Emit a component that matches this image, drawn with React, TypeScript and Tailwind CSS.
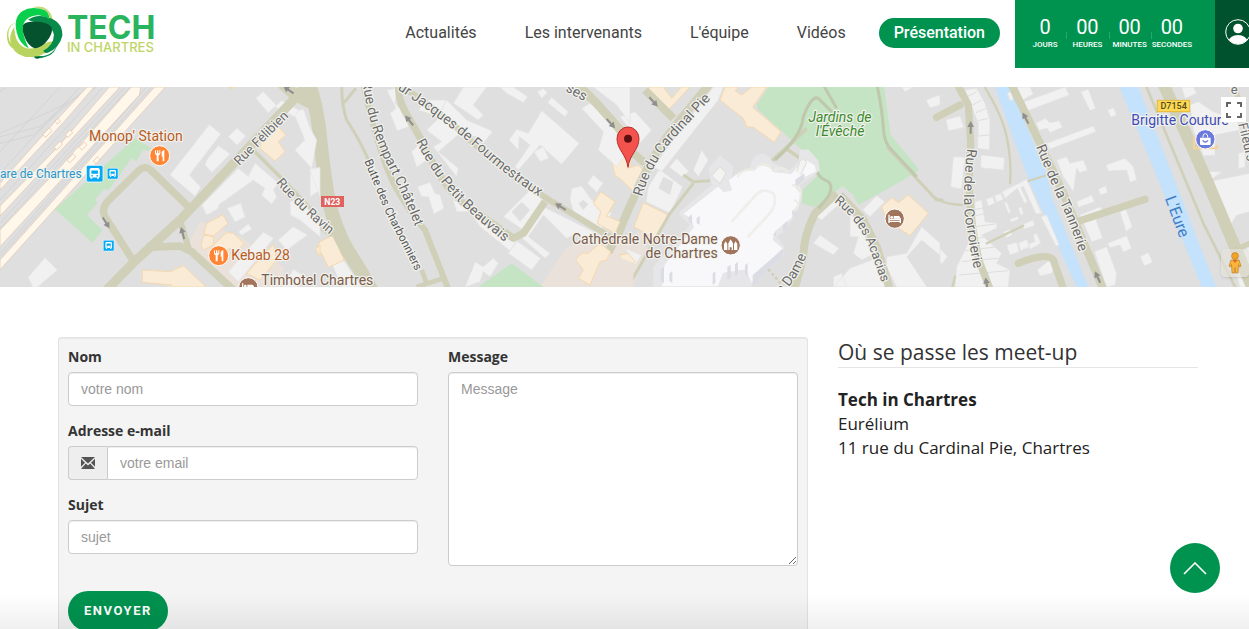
import React from "react";

const halo = "[paint-order:stroke] stroke-[#f2f2ee] stroke-[7px] [stroke-linejoin:round]";
const street = `font-[Roboto,sans-serif] text-[39px] fill-[#6b6b6b] ${halo}`;
const avenue = `font-[Roboto,sans-serif] text-[42px] fill-[#6b6b6b] ${halo}`;

type StreetProps = { id: string; d: string; children: string; className?: string };

function StreetName({ id, d, children, className = street }: StreetProps) {
  return (
    <>
      <path id={id} d={d} fill="none" />
      <text className={className}>
        <textPath href={`#${id}`}>{children}</textPath>
      </text>
    </>
  );
}

function Arrow({ x, y, angle }: { x: number; y: number; angle: number }) {
  return (
    <path
      d="M-18,-3 H2 V-10 L20,0 L2,10 V3 H-18 Z"
      fill="#8f8f8f"
      transform={`translate(${x} ${y}) rotate(${angle})`}
    />
  );
}

function Bus({ x, y, s }: { x: number; y: number; s: number }) {
  return (
    <g transform={`translate(${x} ${y}) scale(${s})`}>
      <rect x="-18" y="-18" width="36" height="36" rx="4" fill="#03a9f4" stroke="#e8f6fd" strokeWidth="2" />
      <path
        fill="#fff"
        fillRule="evenodd"
        d="M-7,-12 H7 Q11,-12 11,-8 V6 Q11,8 9,8 V11 H5 V8 H-5 V11 H-9 V8 Q-11,8 -11,6 V-8 Q-11,-12 -7,-12 Z M-7,-7 V0 H7 V-7 Z M-7,3 V6 H-4 V3 Z M4,3 V6 H7 V3 Z"
      />
    </g>
  );
}

function Food({ x, y }: { x: number; y: number }) {
  return (
    <g transform={`translate(${x} ${y})`}>
      <circle r="30" fill="#ff8534" stroke="#fff" strokeWidth="3" />
      <path
        d="M-14,-16 V-7 Q-14,-2 -9,-1 V17 H-3 V-1 Q2,-2 2,-7 V-16 H-1 V-7 H-4 V-16 H-8 V-7 H-11 V-16 Z M6,-10 Q8,-16 14,-17 V17 H9 V3 H6 Z"
        fill="#fff"
      />
    </g>
  );
}

function Hotel({ x, y }: { x: number; y: number }) {
  return (
    <g transform={`translate(${x} ${y})`}>
      <circle r="29" fill="#a1745c" stroke="#fff" strokeWidth="3" />
      <path d="M-17,-12 V13 M-17,8 H17 M17,-1 V13 M-17,2 H17" stroke="#fff" strokeWidth="4" fill="none" />
      <circle cx="-9" cy="-4" r="4" fill="#fff" />
      <path d="M-3,-8 H12 Q17,-7 17,0 H-3 Z" fill="#fff" />
    </g>
  );
}

function StationQuarter() {
  return (
    <g>
      <path d="M600,425 L560,500 L690,621 H850 L850,560 L720,470 Z M500,590 L550,555 L620,621 H500 Z" fill="#e9e1da" />
      <g fill="none" stroke="#cfcfcf" strokeWidth="2">
        <path d="M0,160 L150,95 L290,21 M0,170 L120,140 L200,70 M0,190 L100,165 L240,40 M0,280 L240,21 M0,360 L310,21 M0,430 L375,21 M0,445 L390,21 M0,520 L440,21 M0,530 L455,21 M20,21 L0,35 M0,215 L180,21" />
      </g>
      <path
        d="M262,21 L282,21 L195,122 L0,330 V310 L165,125 Z M328,21 H360 L0,408 V378 L170,205 Z M394,21 H422 L418,45 L0,500 V450 L180,262 Z M464,21 H496 L0,569 V540 Z"
        fill="#fff7ea"
        stroke="#dfc6b4"
        strokeWidth="2"
      />
      <g fill="#fff7ea" stroke="#dfc0a8" strokeWidth="2">
        {[
          [142, 158, 28], [173, 124, 12], [175, 197, 25], [207, 161, 20],
          [214, 235, 26], [249, 198, 22], [290, 241, 18],
        ].map(([x, y, w]) => (
          <rect key={x} x={-w / 2} y="-6" width={w} height="12" rx="2" transform={`translate(${x} ${y}) rotate(-46)`} />
        ))}
      </g>
      <path
        d="M165,388 L405,175 L455,205 L445,213 L430,208 L408,245 L395,234 L326,330 L312,328 L286,358 L292,370 L260,405 L307,450 L278,488 Z"
        fill="#c4e4c3"
      />
      <g fill="#f1f1f1" stroke="#e7e7e7" strokeWidth="2">
        <path d="M628,134 L662,162 L568,285 L602,322 L585,348 L510,285 Z" />
        <path d="M711,145 L737,168 L711,195 L685,170 Z" />
        <path d="M655,197 L690,222 L636,277 L615,255 L622,238 Z" />
        <path d="M790,35 L828,75 L805,98 L768,55 Z" />
        <path d="M606,375 L715,265 L745,290 L765,250 L835,310 L820,330 L830,350 L815,372 L785,345 L795,325 L760,300 L655,375 L655,385 L620,405 Z" />
        <path d="M722,370 L735,412 L705,425 L682,385 Z M745,432 L755,447 L725,465 L716,456 Z" />
        <path d="M880,95 L910,88 L930,145 L950,180 L935,265 L885,210 L915,180 Z" />
        <path d="M930,270 L960,262 V350 Z M835,480 L880,440 L922,465 L860,510 Z M870,365 L900,360 L960,430 V470 L900,420 L872,405 Z" />
        <path d="M790,457 L820,475 L715,605 L685,575 Z M135,533 L172,570 L112,621 H98 L85,592 Z M825,80 L845,62 L895,90 L885,110 Z" />
        <path d="M880,568 L910,588 L890,621 H850 Z" />
      </g>
      <g fill="#faebd7" stroke="#f5d9ad" strokeWidth="3">
        <path d="M668,405 L684,430 L640,468 L612,462 L620,430 Z M612,465 L640,470 L640,495 L610,510 L603,495 Z M640,495 L680,458 L700,460 L732,490 L710,515 L690,505 L660,525 Z" />
        <path d="M785,170 L830,135 L858,165 L835,185 L855,215 L825,243 L780,205 Z" />
        <path d="M427,570 L510,575 L550,557 L618,621 H515 V615 L427,607 Z M820,493 L830,540 L780,600 L740,580 Z M960,495 L947,508 L960,530 Z" />
      </g>
      <g fill="none" stroke="#d0d0b8" strokeLinejoin="round">
        <path d="M398,540 L318,415 Q300,390 325,362 L418,270 Q435,255 452,270 L570,385" strokeWidth="22" />
        <path d="M310,640 L400,548 L545,415 L720,230 L880,60 L930,0" strokeWidth="28" />
        <path d="M440,502 L540,498 L575,515 L700,630" strokeWidth="23" />
        <path d="M540,420 L566,505" strokeWidth="18" />
        <path d="M755,205 L850,300 L970,425" strokeWidth="11" />
        <path d="M835,0 L885,45 L960,85" strokeWidth="34" />
      </g>
      <Arrow x={318} y={428} angle={58} />
      <Arrow x={548} y={460} angle={-105} />
      <Arrow x={866} y={30} angle={-145} />
      <path d="M686,21 H700 L693,28 Z" fill="#f7d397" />
    </g>
  );
}

function OldTown() {
  return (
    <g>
      <path d="M770,500 L830,490 L970,550 V621 H690 Z" fill="#e9e1da" />
      <path d="M505,621 L605,550 L700,621 Z" fill="#c4e4c3" />
      <g fill="#f1f1f1" stroke="#e2e2e2" strokeWidth="2">
        <path d="M695,92 L808,190 L755,253 L690,195 L625,270 L615,260 L660,195 L628,170 L625,210 L597,180 L620,148 L655,160 Z" />
        <path d="M700,200 L717,235 L690,245 L672,215 Z M682,35 L700,25 L712,38 L695,55 Z M725,52 L775,95 L765,110 L713,68 Z" />
        <path d="M460,21 L530,21 L490,75 L520,105 L505,120 L430,70 Z M570,21 H610 L653,50 L640,68 L590,40 Z M350,60 L410,60 L385,110 L325,90 Z" />
        <path d="M230,30 L262,25 L255,70 L290,110 L295,140 L262,153 L240,100 L258,85 Z M410,60 L470,120 L540,150 L548,155 L520,190 L500,170 L450,160 L385,215 L445,265 L440,290 L370,200 L395,185 L350,150 L380,120 Z" />
        <path d="M305,215 L335,185 L350,240 L320,262 Z M360,307 L375,340 L390,345 L402,385 L372,402 L355,350 L335,350 L322,320 Z" />
        <path d="M420,330 L500,390 L520,430 L625,480 L600,512 L510,440 L480,395 L440,395 Z M620,482 L692,535 L665,570 L595,520 Z" />
        <path d="M660,330 L705,355 L640,450 L580,410 L620,370 Z M690,375 L780,420 L850,455 L840,490 L800,460 L770,475 L700,405 L655,470 L720,520 L705,535 L632,470 Z" />
        <path d="M815,85 L840,70 L975,190 L920,260 L865,210 L880,155 Z M850,285 L880,310 L860,337 L832,310 Z M785,325 L815,318 L845,360 L905,400 L870,455 L795,410 L780,360 Z" />
        <path d="M850,21 H960 V130 L920,75 Z M495,545 L520,560 L550,535 L565,550 L540,590 L520,575 L510,605 L465,621 L488,565 Z M0,140 L15,180 L0,195 Z M0,265 L35,262 L48,320 L0,350 Z M65,550 L100,540 L155,621 H95 Z" />
      </g>
      <path d="M605,395 L635,365 L660,390 L630,425 Z M805,370 L820,360 L835,372 L820,390 Z" fill="#dfdfdf" />
      <g fill="#faebd7" stroke="#f5d9ad" strokeWidth="3">
        <path d="M65,468 L92,498 L90,515 L103,540 L55,562 L35,520 L17,510 L30,485 Z" />
        <path d="M872,335 L915,365 L890,408 L930,425 L915,460 L862,430 L872,395 L850,370 Z" />
        <path d="M870,490 L902,515 L890,540 L870,545 L840,615 L805,595 L820,570 L797,540 L815,520 L835,520 Z" />
      </g>
      <g fill="none" stroke="#d0d0b8" strokeLinejoin="round">
        <path d="M-15,-20 Q15,50 28,150 Q35,230 52,340 Q70,440 115,515 Q155,575 195,650" strokeWidth="42" />
        <path d="M95,15 Q95,80 110,120 Q150,180 180,250" strokeWidth="9" />
        <path d="M102,68 L138,25" strokeWidth="9" />
        <path d="M160,10 Q200,200 250,310 Q300,400 345,450 L420,640" strokeWidth="18" />
        <path d="M335,570 L350,610 M320,621 L400,595" strokeWidth="14" />
        <path d="M270,10 Q255,50 300,120 L340,190 Q400,330 475,380 L610,475 L640,460 L705,365" strokeWidth="22" />
        <path d="M260,10 Q390,90 490,190 Q620,300 710,355 L900,470" strokeWidth="18" />
        <path d="M800,10 L860,70 L935,155" strokeWidth="26" />
        <path d="M0,420 L60,462 H95" strokeWidth="14" />
      </g>
      <Arrow x={298} y={122} angle={-130} />
      <Arrow x={752} y={380} angle={-148} />
      <Arrow x={902} y={130} angle={48} />
    </g>
  );
}

function Cathedral() {
  return (
    <g transform="translate(60 180)" strokeLinejoin="round">
      <path
        d="M120,215 L215,135 L205,85 L240,45 L280,80 L275,110 L330,85 Q340,35 375,42 Q395,55 400,70 L450,90 L475,65 L480,30 L505,28 L535,62 L540,90 L520,108 L480,135 L485,175 L470,220 L430,275 L410,290 L432,320 L432,345 L335,440 H40 V380 L75,340 L150,255 L118,225 Z"
        fill="#e6e6e8"
      />
      <path
        d="M128,222 L235,138 L250,155 L275,150 L265,120 L300,95 L345,88 Q355,65 390,82 L400,95 L455,100 L475,75 L500,60 L525,75 L530,95 L495,112 L462,135 L482,160 L478,190 L455,235 L405,275 L400,300 L430,325 L335,430 L315,390 L250,400 L235,440 H65 L72,375 L160,262 L152,235 Z"
        fill="#f8f8fa"
        stroke="#e6e6e6"
        strokeWidth="3"
      />
      <path d="M215,108 L240,80 L258,100 L240,130 Z M470,95 L480,62 L490,55 L500,68 L482,105" fill="#f3f3f1" stroke="#deded8" strokeWidth="3" />
      <path d="M275,245 L345,168 Q370,140 400,160 Q415,190 385,225 L322,292" fill="none" stroke="#eeeeea" strokeWidth="8" />
      <path d="M338,405 L430,325 V345 L338,438 Z M398,285 l10,-8 v12 z M428,255 l14,-12 v22 l-14,8 z M455,215 l16,-16 v24 l-12,8 z M465,120 l28,-20 v18 l-24,22 z M146,232 l10,-10 v30 l-10,-8 z M170,235 l9,-8 v28 l-9,-6 z M262,382 l10,-8 v40 l-10,6 z M285,372 l9,-7 v38 l-9,5 z M218,400 l8,-6 v35 l-8,6 z M62,388 l10,-8 v50 l-10,-8 z M88,400 l9,-6 v35 l-9,-5 z M315,375 l8,-6 v45 l-8,-14 z" fill="#dcdce4" />
      <path d="M292,112 Q310,80 345,92 M348,86 Q368,58 394,82 M402,92 Q428,70 445,102 M455,135 Q490,140 480,172 M462,180 Q488,190 462,215" fill="none" stroke="#ececE4" strokeWidth="6" />
    </g>
  );
}

function CathedralQuarter() {
  return (
    <g>
      <path d="M-160,500 L-110,490 L95,450 L40,621 H-240 Z" fill="#e9e1da" />
      <path d="M445,21 L410,75 L415,90 L482,150 L540,205 L590,240 L598,282 L548,330 L545,370 L585,382 L668,318 L700,345 L715,375 L850,300 L898,270 L812,165 L792,21 Z" fill="#c4e4c3" />
      <g fill="#f1f1f1" stroke="#e2e2e2" strokeWidth="2">
        <path d="M280,21 H310 L295,60 L125,275 L100,260 Z M45,95 L95,150 L60,190 L0,110 Z M170,235 L207,275 L185,290 L148,262 Z M118,268 L188,320 L150,400 L78,365 L85,320 Z M245,210 L265,240 L235,290 L220,270 Z" />
        <path d="M635,355 L660,370 L605,420 L580,405 Z M770,347 L795,365 L750,410 L728,390 Z M600,465 L657,505 L640,525 L580,490 Z M690,400 L715,430 L745,490 L755,525 L725,540 L700,520 L715,470 L690,470 Z" />
        <path d="M780,530 L800,621 H640 L690,565 Z M905,440 L960,490 V621 H830 L800,560 V530 L860,520 Z M640,590 L665,580 L680,621 H640 Z M845,21 H880 L855,35 Z M918,60 L960,45 V75 L930,83 Z M15,505 L65,525 L45,555 Z" />
      </g>
      <path d="M130,290 L160,305 L150,345 L115,325 Z M860,530 L905,480 L960,525 V621 H920 Z" fill="#dfdfdf" />
      <g fill="#faebd7" stroke="#f5d9ad" strokeWidth="3">
        <path d="M90,21 H130 L155,55 L185,21 H210 L145,90 L75,30 Z" />
        <path d="M315,21 H357 L345,32 L365,45 L395,21 H440 L398,82 L483,155 L463,187 L400,142 L380,140 L370,115 L300,60 Z" />
        <path d="M-40,180 L35,245 L25,265 L55,255 L75,275 L40,335 L5,300 L-15,285 Z M70,368 L145,405 L110,480 L42,440 Z M0,525 L25,520 L45,545 L0,600 Z" />
        <path d="M865,345 L925,400 L870,467 L800,420 L785,380 L815,353 L835,368 Z" />
      </g>
      <g fill="none" stroke="#d0d0b8" strokeLinejoin="round">
        <path d="M270,10 L180,120 Q100,220 60,310 Q20,400 -5,460 L-100,640" strokeWidth="25" />
        <path d="M75,30 L160,115 M0,185 L75,250" strokeWidth="24" />
        <path d="M190,285 L220,305 L270,302 M220,310 L150,400 L30,610 L0,600" strokeWidth="9" />
        <path d="M455,243 L497,205 L560,145 M497,205 L540,235" strokeWidth="11" />
        <path d="M650,340 L585,400 Q550,470 550,530 L520,640" strokeWidth="24" />
        <path d="M660,345 L730,420 L770,500 L810,630" strokeWidth="24" />
        <path d="M800,200 L950,360 H970 M960,115 L945,115" strokeWidth="9" />
      </g>
      <g fill="none" stroke="#c0c8ac" strokeWidth="9">
        <path d="M465,240 Q545,170 550,110 Q575,45 595,55 L645,105 M610,15 L650,85 M770,10 Q785,80 790,140 Q790,185 815,210 L890,290" />
        <path d="M590,255 Q585,290 625,305 Q650,330 595,385" />
      </g>
      <Cathedral />
      <path d="M445,568 L490,620" stroke="#d0d0b8" strokeWidth="8" strokeDasharray="8 8" />
      <Arrow x={100} y={65} angle={48} />
    </g>
  );
}

function RiverQuarter() {
  return (
    <g>
      <g fill="#c4e2fc">
        <path d="M195,21 H240 L352,285 L365,350 L475,621 H440 L385,500 L300,310 Q240,150 195,21 Z" />
        <path d="M568,21 H625 L720,265 L858,621 H815 L670,265 Z" />
      </g>
      <g fill="#f1f1f1" stroke="#e2e2e2" strokeWidth="2">
        <path d="M0,55 L25,47 L32,70 L0,82 Z M48,120 L90,108 L102,142 L55,153 Z M105,30 L140,25 L165,70 L180,120 L178,210 L143,205 L145,130 Z M153,225 L223,233 L221,270 L152,263 Z M70,230 L105,232 L95,328 L62,320 Z" />
        <path d="M232,40 L243,35 L250,58 L240,62 Z M260,21 H300 L310,42 L275,62 Z M275,68 L405,21 L418,45 L285,95 Z M452,35 L475,28 L497,85 L480,92 Z M533,90 L550,83 L560,105 L542,112 Z" />
        <path d="M318,130 L345,115 L360,128 L388,122 L397,142 L360,158 L352,145 L328,150 Z M350,190 L490,138 L498,155 L360,207 Z M380,240 L410,230 L420,250 L460,240 L472,270 L450,278 L440,265 L430,335 L400,290 Z" />
        <path d="M528,255 L585,235 L610,260 L620,300 L600,307 L590,270 L535,273 Z M505,328 L527,317 L533,337 L512,345 Z M440,365 L485,345 L493,365 L445,382 Z M450,405 L510,380 L520,395 L495,410 L518,475 L485,485 Z" />
        <path d="M570,395 L588,388 L607,440 L588,455 Z M533,490 L590,467 L605,505 L580,517 L570,495 L540,503 Z M631,530 L655,517 L668,547 L643,558 Z M493,515 L530,500 L560,580 L555,615 L530,621 Z" />
        <path d="M135,365 L155,360 L165,425 L200,430 V445 L155,465 L215,520 L200,550 L240,570 L235,621 H75 L80,560 L115,490 L135,440 Z" />
        <path d="M168,358 L188,350 L195,370 L175,378 Z M193,347 L212,340 L220,358 L200,367 Z M216,335 L290,298 L335,400 L318,402 L280,318 L272,322 L292,365 L283,370 L262,325 L225,355 Z M222,365 L232,368 L242,398 L235,400 Z M265,385 L275,380 L280,402 L272,405 Z M240,418 L265,408 V418 L242,427 Z" />
        <path d="M220,455 L240,448 L246,465 L230,473 Z M275,435 L310,420 L313,437 L282,447 Z M230,495 L260,487 L268,515 L240,525 Z M265,490 L290,478 L300,500 L272,512 Z M310,465 L320,460 L333,490 L300,508 L295,492 L315,485 Z M333,410 L350,405 L388,495 L378,498 Z M322,570 L365,535 L375,560 L365,580 L330,588 Z M0,470 L52,530 L35,552 L0,515 Z" />
        <path d="M755,21 H790 L800,40 L765,55 Z M780,75 L805,65 L850,95 L920,120 L930,150 L855,165 V225 L820,228 L790,150 Z M820,275 L875,275 L835,305 L960,280 V395 L920,405 L905,430 L925,480 L900,490 Z M925,220 L945,215 V262 L925,265 Z M905,535 L960,500 V621 H930 Z" />
      </g>
      <path d="M132,390 L165,382 M132,408 L168,400 M135,440 L195,432 M120,480 L165,470 M105,512 L205,500 M95,545 L205,535 M88,585 L235,572 M140,35 L112,50 M155,60 L128,75 M168,85 L138,98 M175,115 L145,122 M178,165 L145,168" stroke="#dedede" strokeWidth="3" />
      <g fill="none" stroke="#d0d0b8" strokeLinejoin="round" strokeLinecap="round">
        <path d="M75,0 L115,75 L122,190 Q115,300 120,360 Q125,460 150,550 L185,640" strokeWidth="22" />
        <path d="M20,112 L90,75" strokeWidth="22" />
        <path d="M160,15 Q220,110 232,180 Q245,250 240,310 M105,375 Q30,375 0,340 M75,590 L65,630 M170,490 L280,437" strokeWidth="7" />
        <path d="M240,5 L330,190 L400,340 L470,510 L525,640" strokeWidth="24" />
        <path d="M295,303 L352,285" strokeWidth="6" />
        <path d="M450,422 L645,358" strokeWidth="22" />
        <path d="M265,550 Q350,515 370,540 L405,640" strokeWidth="22" />
        <path d="M645,10 L820,430 L920,630" strokeWidth="8" />
        <path d="M695,0 L830,300 L970,630" strokeWidth="36" />
        <path d="M925,505 L970,485 M910,0 L960,190" strokeWidth="16" />
      </g>
      <Arrow x={122} y={143} angle={-90} />
      <Arrow x={287} y={115} angle={-118} />
      <Arrow x={503} y={592} angle={-115} />
      <Arrow x={170} y={612} angle={-100} />
      <path d="M792,170 V205 H860 V195" fill="none" stroke="#f5d29b" strokeWidth="6" />
    </g>
  );
}

function Labels() {
  const place = "font-[Roboto,sans-serif] text-[42px]";
  return (
    <g>
      <StreetName id="st-felibien" d="M718,258 L960,16">Rue Félibien</StreetName>
      <StreetName id="st-ravin" d="M828,308 Q895,390 1010,480">Rue du Ravin</StreetName>
      <g transform="translate(930 0)">
        <StreetName id="st-rempart" className={avenue} d="M158,4 Q170,120 222,235 Q285,350 345,520">Rue du Rempart Châtelet</StreetName>
        <StreetName
          id="st-butte"
          d="M163,243 Q195,320 228,400 Q275,490 345,630"
          className="font-[Roboto,sans-serif] text-[35px] fill-[#555] [paint-order:stroke] stroke-[#f2f2ee] stroke-[7px]"
        >
          Butte des Charbonniers
        </StreetName>
        <StreetName id="st-jacques" className={avenue} d="M262,28 Q395,115 515,220 Q600,300 760,395">ur Jacques de Fourmestraux</StreetName>
        <StreetName id="st-petit" className={avenue} d="M318,185 Q365,280 440,360 Q520,440 680,560">Rue du Petit Beauvais</StreetName>
        <StreetName id="st-ses" className={avenue} d="M765,32 L870,90">ses</StreetName>
      </g>
      <g transform="translate(1860 0)">
        <StreetName id="st-cardinal" d="M66,350 Q95,250 160,178 L320,5" className={avenue}>Rue du Cardinal Pie</StreetName>
        <StreetName id="st-acacias" d="M642,365 Q720,425 750,510 L800,650">Rue des Acacias</StreetName>
        <StreetName id="st-dame" className={avenue} d="M483,645 Q545,590 575,480">e Dame</StreetName>
      </g>
      <g transform="translate(2790 0)">
        <StreetName id="st-corroierie" className={avenue} d="M112,205 Q92,370 112,450 Q120,520 150,650">Rue de la Corroierie</StreetName>
        <StreetName id="st-tannerie" className={avenue} d="M318,200 Q370,330 405,400 Q435,470 480,620">Rue de la Tannerie</StreetName>
        <StreetName id="st-fileurs" d="M925,132 L960,280">Fileurs</StreetName>
        <text x="902" y="42" className={street}>e</text>
        <StreetName id="river-eure" d="M704,355 L770,530" className="font-[Roboto,sans-serif] text-[48px] fill-[#3f7fc8]">
          L'Eure
        </StreetName>
      </g>

      <g className={halo}>
        <text x="267" y="183" className={`${place} fill-[#b85c1e]`}>Monop' Station</text>
        <text x="245" y="294" textAnchor="end" className="font-[Roboto,sans-serif] text-[36px] fill-[#2b95c8]">Gare de Chartres</text>
        <text x="694" y="541" className={`${place} fill-[#b85c1e]`}>Kebab 28</text>
        <text x="784" y="615" className={`${place} fill-[#7b5b49]`}>Timhotel Chartres</text>
        <text x="2153" y="492" textAnchor="end" className={`${place} fill-[#7b5b49]`}>Cathédrale Notre-Dame</text>
        <text x="2153" y="535" textAnchor="end" className={`${place} fill-[#7b5b49]`}>de Chartres</text>
        <text x="2520" y="126" textAnchor="middle" className={`${place} italic fill-[#3a8a2c]`}>Jardins de</text>
        <text x="2520" y="168" textAnchor="middle" className={`${place} italic fill-[#3a8a2c]`}>l'Évêché</text>
        <text x="3394" y="136" className={`${place} fill-[#3e4cb5]`}>Brigitte Couture</text>
      </g>

      <rect x="963" y="348" width="69" height="33" fill="#e0625f" />
      <text x="997" y="374" textAnchor="middle" className="font-[Roboto,sans-serif] text-[26px] font-bold fill-white">N23</text>
      <rect x="3472" y="61" width="97" height="34" fill="#fdd955" stroke="#e6b93c" strokeWidth="3" />
      <text x="3521" y="88" textAnchor="middle" className="font-[Roboto,sans-serif] text-[27px] font-medium fill-[#54491c]">D7154</text>

      <Bus x={284} y={281} s={1.4} />
      <Bus x={338} y={281} s={0.9} />
      <Bus x={326} y={497} s={0.9} />
      <Food x={479} y={227} />
      <Food x={656} y={527} />
      <Hotel x={745} y={622} />
      <Hotel x={2684} y={416} />
      <g transform="translate(2192 496)">
        <circle r="29" fill="#a1745c" stroke="#fff" strokeWidth="3" />
        <path d="M-20,14 V-4 L-15,-12 L-10,-4 V14 Z M-7,14 V-6 L0,-18 L7,-6 V14 H3 V6 H-3 V14 Z M10,14 V-4 L15,-12 L20,-4 V14 Z" fill="#fff" />
      </g>
      <g transform="translate(3616 178)">
        <circle r="29" fill="#6b79dc" stroke="#fff" strokeWidth="3" />
        <path d="M-16,-5 H16 V14 Q16,17 13,17 H-13 Q-16,17 -16,14 Z" fill="#fff" />
        <path d="M-7,-5 V-10 Q-6,-17 0,-17 Q6,-17 7,-10 V-5" fill="none" stroke="#fff" strokeWidth="3" />
        <path d="M-8,3 Q0,13 8,3" fill="none" stroke="#6b79dc" strokeWidth="4" />
      </g>
      <g transform="translate(1884 260)">
        <path d="M0,2 C-4,-35 -33,-52 -33,-84 A33,35 0 0 1 33,-84 C33,-52 4,-35 0,2 Z" fill="#f4524d" stroke="#b22f2c" strokeWidth="3" />
        <circle cy="-84" r="12" fill="#5c0f10" />
      </g>
    </g>
  );
}

function MapView() {
  return (
    <section aria-label="Plan d'accès" className="relative h-[200px] w-full overflow-hidden bg-[#dfdfdf]">
      <svg viewBox="0 21 3747 600" preserveAspectRatio="xMidYMid slice" className="block h-full w-full">
        <g transform="translate(2790 0)"><RiverQuarter /></g>
        <g transform="translate(1860 0)"><CathedralQuarter /></g>
        <g transform="translate(930 0)"><OldTown /></g>
        <StationQuarter />
        <Labels />
      </svg>
      <button aria-label="Plein écran" className="absolute right-[3px] top-[10px] flex size-[25px] items-center justify-center bg-white">
        <svg viewBox="0 0 16 16" className="size-4" fill="none" stroke="#666" strokeWidth="2">
          <path d="M1,5 V1 H5 M11,1 H15 V5 M15,11 V15 H11 M5,15 H1 V11" />
        </svg>
      </button>
      <button aria-label="Street View" className="absolute bottom-[10px] right-0 flex h-7 w-7 items-center justify-center rounded-sm bg-[#e4e2db]/60 shadow-sm">
        <svg viewBox="0 0 14 22" className="h-[22px] w-[14px]">
          <circle cx="7" cy="4" r="3.4" fill="#f2a428" stroke="#b8741a" strokeWidth=".6" />
          <path d="M3,8 H11 L13,14 L11.5,15 L10.5,12.5 L10,21 H7.6 L7,15.5 L6.4,21 H4 L3.5,12.5 L2.5,15 L1,14 Z" fill="#f9b53c" stroke="#b8741a" strokeWidth=".6" />
          <path d="M4.5,8 H9.5 L7,11 Z" fill="#e2692a" />
        </svg>
      </button>
    </section>
  );
}

function Logo() {
  return (
    <a href="#accueil" aria-label="Tech in Chartres" className="flex items-center gap-1 pl-[7px]">
      <svg viewBox="20 16 170 165" className="h-[55px] w-14">
        <path d="M96,22 Q148,10 160,62 L148,52 Q135,24 96,22 Z" fill="#c3d97a" />
        <path d="M112,34 Q142,32 148,54 L122,46 Z" fill="#05522f" />
        <path d="M46,68 Q22,80 24,108 Q28,140 56,152 Q20,148 20,108 Q20,76 46,68 Z" fill="#b9d65c" />
        <path d="M102,168 Q160,178 173,130 Q168,165 138,172 Q124,178 104,177 Z" fill="#0a8f4f" />
        <path d="M42,82 Q44,138 80,146 Q104,152 134,132 Q160,120 166,132 Q142,168 100,173 Q50,176 34,140 Q22,108 42,82 Z" fill="#b8d45e" />
        <path d="M84,60 Q108,42 142,52 Q190,64 188,108 Q180,144 144,160 Q132,162 130,154 Q164,134 162,104 Q156,74 112,68 Q94,66 84,60 Z" fill="#078b4b" />
        <path d="M136,32 Q96,16 66,34 Q38,54 50,100 Q58,134 86,146 Q68,112 68,82 Q72,50 112,46 Q134,46 148,58 Q148,40 136,32 Z" fill="#09cf4c" />
        <path d="M68,78 Q72,66 98,66 Q144,64 156,84 Q160,102 140,126 Q124,146 104,146 Q84,140 74,114 Q66,96 68,78 Z" fill="#05522f" />
        <path d="M102,171 L122,174 L112,178 Z" fill="#05522f" />
      </svg>
      <span className="flex flex-col font-[Inter,sans-serif]">
        <span className="text-[32px] font-bold leading-[28px] text-[#29b45d]">TECH</span>
        <span className="text-[13px] font-medium leading-[10px] text-[#bdd566]">IN CHARTRES</span>
      </span>
    </a>
  );
}

const links = ["Actualités", "Les intervenants", "L'équipe", "Vidéos"];
const counters = ["JOURS", "HEURES", "MINUTES", "SECONDES"];

function Header() {
  return (
    <header className="flex h-[87px] items-start bg-white font-[Roboto,sans-serif]">
      <div className="pt-[5px]"><Logo /></div>
      <nav className="ml-auto mr-[15px] flex items-center gap-[18px] pt-[18px] text-base leading-[30px] text-[#444]">
        {links.map((l) => (
          <a key={l} href="#" className="px-[15px]">{l}</a>
        ))}
        <a href="#" className="rounded-full bg-[#009350] px-[15px] font-medium text-white">Présentation</a>
      </nav>
      <div className="flex h-[68px] w-[200px] bg-[#009350] pl-[9px] pr-[22px] text-white">
        {counters.map((c, i) => (
          <div key={c} className="relative flex flex-1 flex-col items-center pt-4">
            {i > 0 && <span className="absolute left-0 top-8 h-[7px] w-px bg-[#2ba56d]" />}
            <span className="text-xl leading-[22px]">{i === 0 ? "0" : "00"}</span>
            <span className="text-[8px] font-medium leading-[14px]">{c}</span>
          </div>
        ))}
      </div>
      <button aria-label="Compte" className="flex h-[68px] w-[34px] items-start overflow-hidden bg-[#00522f] pl-[10px] pt-[19px]">
        <svg viewBox="0 0 26 26" className="size-[26px] max-w-none shrink-0">
          <clipPath id="avatar"><circle cx="13" cy="13" r="12" /></clipPath>
          <circle cx="13" cy="13" r="12.3" fill="none" stroke="#fff" />
          <circle cx="13" cy="9.5" r="4.8" fill="#fff" />
          <ellipse cx="13" cy="22.5" rx="9.5" ry="6.5" fill="#fff" clipPath="url(#avatar)" />
        </svg>
      </button>
    </header>
  );
}

const label = "mb-[5px] block text-sm font-bold leading-5 text-[#333]";
const field =
  "block w-full border border-[#ccc] bg-white px-3 py-[6px] font-['Liberation_Sans',sans-serif] text-sm leading-5 shadow-[inset_0_1px_1px_rgba(0,0,0,0.075)] outline-none placeholder:text-[#999] placeholder:opacity-100";

function ContactForm() {
  return (
    <form className="rounded-[3px] border border-[#e3e3e3] bg-[#f4f4f4] p-[9px] shadow-[inset_0_1px_1px_rgba(0,0,0,0.05)]">
      <div className="grid grid-cols-2 gap-[30px]">
        <div className="flex flex-col gap-[15px]">
          <div>
            <label htmlFor="name" className={label}>Nom</label>
            <input id="name" placeholder="votre nom" className={`${field} rounded`} />
          </div>
          <div>
            <label htmlFor="email" className={label}>Adresse e-mail</label>
            <div className="flex">
              <span className="flex w-[39px] shrink-0 items-center justify-center rounded-l border border-r-0 border-[#ccc] bg-[#eee]">
                <svg viewBox="0 0 14 12" className="h-3 w-[14px]" fill="#555">
                  <path d="M0,0 H14 L7,6.5 Z M0,1.8 L4,5.8 L0,9.8 Z M14,1.8 V9.8 L10,5.8 Z M0,12 L4.8,6.6 L7,8.6 L9.2,6.6 L14,12 Z" />
                </svg>
              </span>
              <input id="email" type="email" placeholder="votre email" className={`${field} rounded-r`} />
            </div>
          </div>
          <div>
            <label htmlFor="subject" className={label}>Sujet</label>
            <input id="subject" placeholder="sujet" className={`${field} rounded`} />
          </div>
        </div>
        <div>
          <label htmlFor="message" className={label}>Message</label>
          <textarea id="message" placeholder="Message" className={`${field} h-[194px] resize rounded`} />
        </div>
      </div>
      <button className="mt-[25px] h-10 rounded-full bg-[#009350] px-4 text-[13px] font-bold tracking-[1.5px] text-white font-[Roboto,sans-serif]">
        ENVOYER
      </button>
    </form>
  );
}

export default function App() {
  return (
    <div className="min-h-screen bg-white font-['Open_Sans',sans-serif] text-[#222]">
      <Header />
      <MapView />
      <main className="grid grid-cols-[25fr_12fr] items-start gap-[30px] pl-[58px] pr-[51px] pt-[50px]">
        <ContactForm />
        <aside>
          <h2 className="mb-5 border-b border-[#e5e5e5] text-[21px] leading-[30px] text-[#333]">Où se passe les meet-up</h2>
          <address className="text-[17px] not-italic leading-6">
            <strong>Tech in Chartres</strong>
            <br />
            Eurélium
            <br />
            11 rue du Cardinal Pie, Chartres
          </address>
        </aside>
      </main>
      <div className="pointer-events-none fixed inset-x-0 bottom-0 h-9 bg-gradient-to-t from-black/6 to-transparent" />
      <a href="#" aria-label="Haut de page" className="fixed bottom-9 right-[29px] flex size-[50px] items-center justify-center rounded-full bg-[#009350]">
        <svg viewBox="0 0 24 13" className="h-[13px] w-6" fill="none" stroke="#fff" strokeWidth="1.6">
          <path d="M1,12 L12,1 L23,12" />
        </svg>
      </a>
    </div>
  );
}
